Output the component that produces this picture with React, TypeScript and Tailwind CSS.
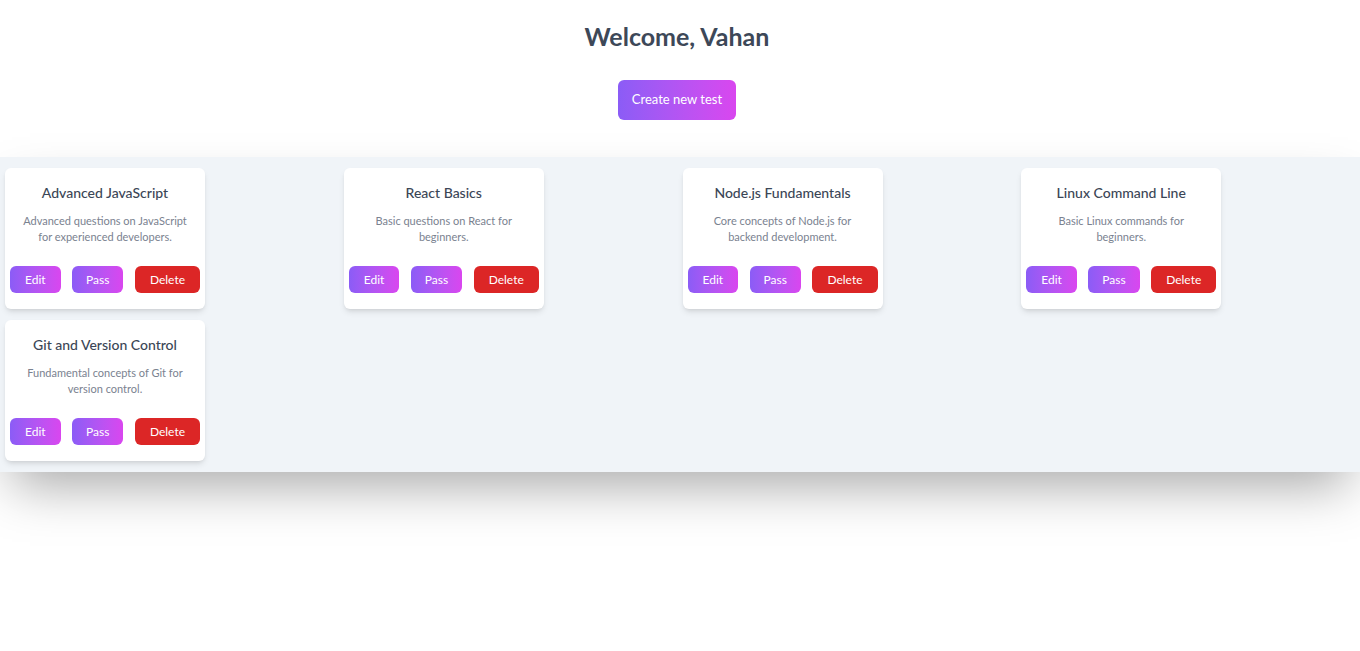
const tests = [
  { title: "Advanced JavaScript", description: "Advanced questions on JavaScript for experienced developers." },
  { title: "React Basics", description: "Basic questions on React for beginners." },
  { title: "Node.js Fundamentals", description: "Core concepts of Node.js for backend development." },
  { title: "Linux Command Line", description: "Basic Linux commands for beginners." },
  { title: "Git and Version Control", description: "Fundamental concepts of Git for version control." },
];

function TestCard({ title, description }: { title: string; description: string }) {
  return (
    <div className="flex w-[200px] flex-col rounded-md bg-white px-[5px] pb-[16px] pt-[16px] shadow-md">
      <h3 className="text-center text-[14px] font-medium leading-[18px] text-[#3b4656]">{title}</h3>
      <p className="mx-auto mt-[11px] w-[170px] text-center text-[11px] leading-[16px] text-[#7a8290]">
        {description}
      </p>
      <div className="mt-[21px] flex justify-between">
        <button className="h-[27px] rounded-md bg-gradient-to-r from-[#8b5cf6] to-[#d946ef] px-[15px] text-[12px] text-white">
          Edit
        </button>
        <button className="h-[27px] rounded-md bg-gradient-to-r from-[#8b5cf6] to-[#d946ef] px-[14px] text-[12px] text-white">
          Pass
        </button>
        <button className="h-[27px] rounded-md bg-[#dc2626] px-[15px] text-[12px] text-white">Delete</button>
      </div>
    </div>
  );
}

export default function App() {
  return (
    <div className="min-h-screen bg-white font-['Lato','Noto_Sans',sans-serif]">
      <div className="flex flex-col items-center pb-[37px] pr-[6px] pt-[21px]">
        <h1 className="text-[25px] font-bold leading-[30px] text-[#3d4858]">Welcome, Vahan</h1>
        <button className="mt-[29px] h-[40px] w-[118px] rounded-md bg-gradient-to-r from-[#8b5cf6] to-[#d946ef] text-[13px] text-white">
          Create new test
        </button>
      </div>

      <div className="grid grid-cols-4 gap-x-[5px] gap-y-[11px] bg-[#f0f4f8] px-[5px] py-[11px] shadow-[0_25px_50px_-12px_rgba(0,0,0,0.35)]">
        {tests.map((t) => (
          <TestCard key={t.title} title={t.title} description={t.description} />
        ))}
      </div>
    </div>
  );
}
